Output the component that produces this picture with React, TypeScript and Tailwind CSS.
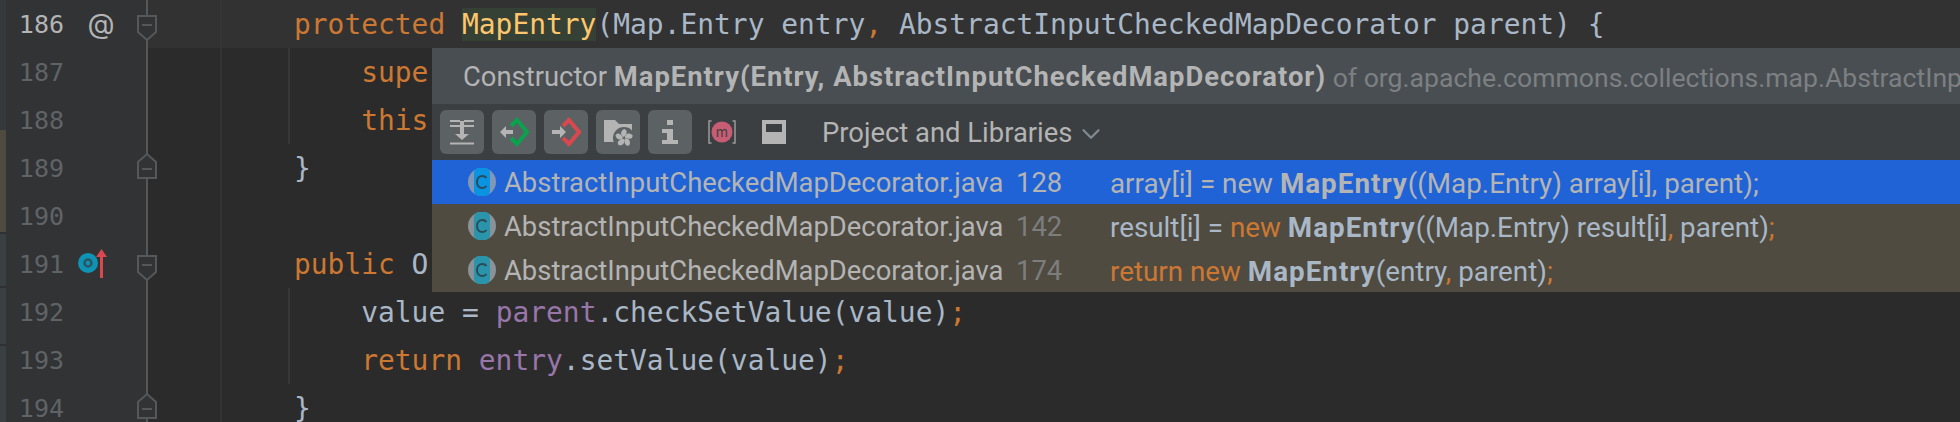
import type { ReactNode } from 'react';
import { ChevronDown } from 'lucide-react';

const MONO = "font-['DejaVu_Sans_Mono',monospace]";
const UI = "font-['Roboto',sans-serif]";

const Kw = ({ children }: { children: ReactNode }) => <span className="text-[#cc7832]">{children}</span>;
const Field = ({ children }: { children: ReactNode }) => <span className="text-[#9876aa]">{children}</span>;
const Bold = ({ children }: { children: ReactNode }) => <span className="font-bold tracking-[1px]">{children}</span>;

type Fold = 'start' | 'end' | null;

interface Line {
    no: number;
    fold: Fold;
    guide?: boolean;
    code: ReactNode;
}

const LINES: Line[] = [
    {
        no: 186,
        fold: 'start',
        code: (
            <>
                <Kw>protected </Kw>
                <span className="bg-[#344134] text-[#ffc66d]">MapEntry</span>(Map.Entry entry<Kw>,</Kw> AbstractInputCheckedMapDecorator parent) {'{'}
            </>
        ),
    },
    // the popup covers the rest of these three lines
    { no: 187, fold: null, guide: true, code: <Kw>    supe</Kw> },
    { no: 188, fold: null, guide: true, code: <Kw>    this</Kw> },
    { no: 189, fold: 'end', code: <>{'}'}</> },
    { no: 190, fold: null, code: null },
    { no: 191, fold: 'start', code: <><Kw>public </Kw>O</> },
    { no: 192, fold: null, guide: true, code: <>    value = <Field>parent</Field>.checkSetValue(value)<Kw>;</Kw></> },
    { no: 193, fold: null, guide: true, code: <><Kw>    return </Kw><Field>entry</Field>.setValue(value)<Kw>;</Kw></> },
    { no: 194, fold: 'end', code: <>{'}'}</> },
];

function FoldMark({ fold }: { fold: Fold }) {
    return (
        <svg width="22" height="48" viewBox="0 0 22 48" className="absolute right-[-11px] top-0">
            {fold === 'start' && (
                <>
                    <path d="M11 0V16M11 40V48" stroke="#555759" strokeWidth="2" />
                    <path d="M2 16H20V32L11 40L2 32Z" fill="#313335" stroke="#555759" strokeWidth="2" />
                    <path d="M6 25H16" stroke="#555759" strokeWidth="2" />
                </>
            )}
            {fold === 'end' && (
                <>
                    <path d="M11 0V10M11 34V48" stroke="#555759" strokeWidth="2" />
                    <path d="M2 34H20V18L11 10L2 18Z" fill="#313335" stroke="#555759" strokeWidth="2" />
                    <path d="M6 25H16" stroke="#555759" strokeWidth="2" />
                </>
            )}
            {fold === null && <path d="M11 0V48" stroke="#555759" strokeWidth="2" />}
        </svg>
    );
}

function GutterIcon({ no }: { no: number }) {
    if (no === 186) {
        return <span className="ml-[14px] font-['Inter',sans-serif] text-[28px] leading-none text-[#b4b4b4]">@</span>;
    }
    if (no === 191) {
        return (
            <svg width="32" height="32" viewBox="0 0 32 32">
                <circle cx="10" cy="15" r="10" fill="#0f93b4" />
                <circle cx="10" cy="15" r="3.5" fill="none" stroke="#2b5563" strokeWidth="2.5" />
                <path d="M23.5 30V8" stroke="#d9484f" strokeWidth="3" />
                <path d="M18 9L23.5 1L29 9Z" fill="#d9484f" />
            </svg>
        );
    }
    return null;
}

function CodeRow({ line }: { line: Line }) {
    const current = line.no === 186;
    return (
        <div className="flex h-12 w-full shrink-0">
            <div className="relative flex w-[141px] shrink-0 items-center bg-[#313335]">
                <span className={`${MONO} w-[58px] pt-[2px] text-right text-[25px] ${current ? 'text-[#b4b4b4]' : 'text-[#606366]'}`}>{line.no}</span>
                <div className="flex w-[50px] justify-center pl-[10px]"><GutterIcon no={line.no} /></div>
                <FoldMark fold={line.fold} />
            </div>
            <div className={`flex min-w-0 flex-1 ${current ? 'bg-[#323232]' : 'bg-[#2b2b2b]'}`}>
                <div className={`w-[75px] shrink-0 border-r-2 ${current ? 'border-[#353535]' : 'border-[#333333]'}`} />
                <div className={`w-[68px] shrink-0 border-r-2 ${line.guide ? 'border-[#373737]' : 'border-transparent'}`} />
                <div className={`${MONO} flex items-center whitespace-pre pl-[4px] pt-[2px] text-[27.92px] text-[#a9b7c6]`}>
                    <span>{line.code}</span>
                </div>
            </div>
        </div>
    );
}

const TOOL = '#b4b4b4';
const BLADES = [0, 72, 144, 216, 288];

function ToolButton({ children }: { children: ReactNode }) {
    return (
        <div className="flex h-11 w-11 items-center justify-center rounded-md bg-[#5c6164]">
            <svg width="44" height="44" viewBox="0 0 44 44">{children}</svg>
        </div>
    );
}

function Toolbar() {
    return (
        <div className="flex h-14 items-center bg-[#3c3f41] pl-2">
            <div className="flex items-center gap-2">
                <ToolButton>
                    <path d="M10 11H20M24 11H34M10 16H20M24 16H34" stroke={TOOL} strokeWidth="2" />
                    <path d="M22 11V25" stroke={TOOL} strokeWidth="4" />
                    <path d="M15 24H29L22 30Z" fill={TOOL} />
                    <path d="M10 33.5H34" stroke={TOOL} strokeWidth="2" />
                </ToolButton>
                <ToolButton>
                    <path d="M19 16L25 10L35 22L25 34L19 28" fill="none" stroke="#0aa14f" strokeWidth="4" />
                    <path d="M8 22L14 16V20H21V24H14V28Z" fill={TOOL} />
                </ToolButton>
                <ToolButton>
                    <path d="M19 16L25 10L35 22L25 34L19 28" fill="none" stroke="#d9484f" strokeWidth="4" />
                    <path d="M22 22L16 16V20H8V24H16V28Z" fill={TOOL} />
                </ToolButton>
                <ToolButton>
                    <path d="M8 10H19L23 14H36V24H28L22 32H8Z" fill={TOOL} />
                    <circle cx="28" cy="28" r="11" fill="#5c6164" />
                    {BLADES.map((deg) => (
                        <path key={deg} d="M28 27C24 26 24 21 28 19C32 20 31 24 28 27Z" fill={TOOL} transform={`rotate(${deg} 28 28)`} />
                    ))}
                </ToolButton>
                <ToolButton>
                    <path d="M19 10H25V15H19ZM14 19H25V30H30V34H14V30H19V23H14Z" fill={TOOL} />
                </ToolButton>
            </div>
            <svg width="28" height="24" viewBox="0 0 28 24" className="ml-4">
                <path d="M3.5 1H1V23H3.5M24.5 1H27V23H24.5" fill="none" stroke="#9a9a9a" strokeWidth="1.5" />
                <circle cx="14" cy="12" r="10.5" fill="#c75d74" />
                <text x="14" y="17" textAnchor="middle" fontSize="14" fill="#3c3f41" fontFamily="Inter, sans-serif">m</text>
            </svg>
            <svg width="24" height="24" viewBox="0 0 24 24" className="ml-[26px]">
                <path d="M0 0H24V24H0ZM4 4V12H20V4Z" fill={TOOL} fillRule="evenodd" />
            </svg>
            <span className={`${UI} ml-9 pt-1 text-[27.4px] text-[#b4b4b4]`}>Project and Libraries</span>
            <ChevronDown size={30} strokeWidth={1.8} className="ml-[4px] mt-[3px] text-[#7f8b91]" />
        </div>
    );
}

function ClassIcon({ selected }: { selected: boolean }) {
    return (
        <svg width="28" height="28" viewBox="0 0 28 28" className="shrink-0">
            <circle cx="14" cy="14" r="14" fill={selected ? '#8097b8' : '#8a9299'} />
            <rect x="6" y="0" width="16" height="28" rx="5" fill={selected ? '#0a93e0' : '#2a94ab'} />
            <path d="M18.5 10C17.5 8.7 16 8 14.4 8C11.2 8 9 10.6 9 14C9 17.4 11.2 20 14.4 20C16 20 17.5 19.3 18.5 18" fill="none" stroke="#2b4a57" strokeWidth="2" />
        </svg>
    );
}

function UsageRow({ lineNo, selected, children }: { lineNo: number; selected?: boolean; children: ReactNode }) {
    return (
        <div className={`${UI} flex h-11 items-center whitespace-pre text-[27.4px] ${selected ? 'bg-[#1f63d6]' : 'bg-[#4f4b41]'} text-[#b4b4b4]`}>
            <div className="ml-9 flex w-[548px] shrink-0 items-center gap-2">
                <ClassIcon selected={!!selected} />
                <span className="pt-1">AbstractInputCheckedMapDecorator.java</span>
            </div>
            <span className={`w-[94px] shrink-0 pt-1 ${selected ? 'text-[#b4b4b4]' : 'text-[#7d7d7d]'}`}>{lineNo}</span>
            <span className={`pt-1 text-[27.8px] ${selected ? 'text-[#b4b4b4]' : 'text-[#a9b7c6]'}`}>{children}</span>
        </div>
    );
}

export default function App() {
    return (
        <div className="relative flex h-[422px] w-[1960px] overflow-hidden bg-[#2b2b2b]">
            {/* error stripe on the far left */}
            <div className="flex w-[6px] shrink-0 flex-col bg-[#3a3f42]">
                <div className="h-[130px] bg-[#35393c]" />
                <div className="h-[102px] bg-[#4e4a40]" />
                <div className="h-[54px] border-t-2 border-[#2e3032] bg-[#3a3f42]" />
                <div className="h-[58px] border-t-2 border-[#2e3032] bg-[#3a3f42]" />
                <div className="flex-1 border-t-2 border-[#2e3032] bg-[#3a3f42]" />
            </div>
            <div className="min-w-0 flex-1">
                {LINES.map((line) => <CodeRow key={line.no} line={line} />)}
            </div>

            {/* usages popup, over the editor */}
            <div className="absolute left-[432px] right-0 top-12 h-[244px] overflow-hidden bg-[#3c3f41]">
                <div className={`${UI} flex h-14 items-center whitespace-pre bg-[#494e52] pl-[31px] pt-[3px] text-[27.4px] text-[#b4b4b4]`}>
                    <span>Constructor </span>
                    <Bold>MapEntry(Entry, AbstractInputCheckedMapDecorator)</Bold>
                    <span className="text-[26.6px] text-[#7d8082]"> of org.apache.commons.collections.map.AbstractInp</span>
                </div>
                <Toolbar />
                <UsageRow lineNo={128} selected>
                    array[i] = new <Bold>MapEntry</Bold>((Map.Entry) array[i], parent);
                </UsageRow>
                <UsageRow lineNo={142}>
                    result[i] = <Kw>new </Kw><Bold>MapEntry</Bold>((Map.Entry) result[i]<Kw>,</Kw> parent)<Kw>;</Kw>
                </UsageRow>
                <UsageRow lineNo={174}>
                    <Kw>return new </Kw><Bold>MapEntry</Bold>(entry<Kw>,</Kw> parent)<Kw>;</Kw>
                </UsageRow>
            </div>
        </div>
    );
}
